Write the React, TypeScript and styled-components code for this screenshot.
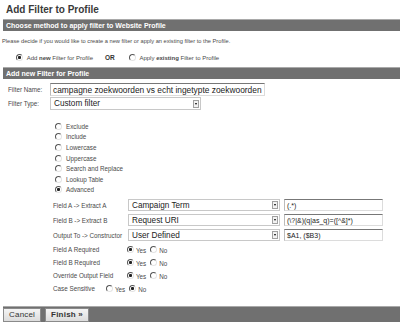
import React from "react";
import styled, { createGlobalStyle, css } from "styled-components";

const GlobalStyle = createGlobalStyle`
	body {
		margin: 0;
		background: #fff;
		font-family: "Liberation Sans", Arial, sans-serif;
		color: #4a4a4a;
	}
`;

const Page = styled.div`
	width: 400px;
	height: 326px;
	overflow: hidden;
	display: flex;
	flex-direction: column;
`;

const Title = styled.h1`
	margin: 0;
	padding: 4px 0 0 6px;
	height: 15px;
	font-size: 10px;
	line-height: 12px;
	font-weight: bold;
	color: #3a3a3a;
`;

const Bar = styled.div`
	margin-left: 3px;
	height: 11px;
	background: #707070;
	border-top: 1px solid #a9a9a9;
	color: #fff;
	font-size: 7px;
	font-weight: bold;
	line-height: 11px;
	padding-left: 3px;
`;

const Intro = styled.p`
	margin: 0;
	padding: 6px 0 0 2px;
	font-size: 5.7px;
	line-height: 9px;
`;

const MethodRow = styled.div`
	display: flex;
	align-items: center;
	padding: 7px 0 5px 16px;
	height: 9px;
	font-size: 6px;
	gap: 2px;
`;

const Or = styled.b`
	margin: 0 12px 0 10px;
	font-size: 6.5px;
	color: #333;
`;

const Radio = styled.span<{ $on?: boolean }>`
	display: inline-block;
	flex: none;
	width: 5px;
	height: 5px;
	border-radius: 50%;
	border: 1px solid;
	border-color: #555 #e4e4e4 #e4e4e4 #555;
	background: #fff;
	${(p) =>
		p.$on &&
		css`
			background: radial-gradient(circle, #222 0 1.3px, #fff 1.8px);
		`}
`;

const Form = styled.div`
	display: flex;
	flex-direction: column;
	padding-top: 4px;
	font-size: 6.3px;
`;

const Row = styled.div<{ $label: number; $left: number; $h?: number; $mt?: number }>`
	display: flex;
	align-items: center;
	height: ${(p) => p.$h ?? 13}px;
	margin-top: ${(p) => p.$mt ?? 0}px;
	padding-left: ${(p) => p.$left}px;

	& > label {
		width: ${(p) => p.$label}px;
		flex: none;
	}
`;

const TextBox = styled.div<{ $w: number; $size?: number; $gap?: number }>`
	box-sizing: border-box;
	width: ${(p) => p.$w}px;
	height: 100%;
	margin-left: ${(p) => p.$gap ?? 0}px;
	border: 1px solid #dcdcdc;
	border-top-color: #777;
	border-left-color: #bbb;
	padding-left: 2px;
	display: flex;
	align-items: center;
	font-size: ${(p) => p.$size ?? 8.4}px;
	color: #222;
	white-space: nowrap;
	overflow: hidden;
`;

const Select = styled.div<{ $w: number }>`
	box-sizing: border-box;
	width: ${(p) => p.$w}px;
	height: 100%;
	border: 1px solid #c8c8c8;
	display: flex;
	align-items: center;
	justify-content: space-between;
	padding-left: 3px;
	font-size: 8.2px;
	color: #222;
	white-space: nowrap;
`;

const Arrow = styled.span`
	box-sizing: border-box;
	width: 6px;
	height: 8px;
	margin-right: 1px;
	border: 1px solid #a0a0a0;
	background: #f2f2f2;
	display: flex;
	align-items: center;
	justify-content: center;

	&::before {
		content: "";
		border-left: 1.5px solid transparent;
		border-right: 1.5px solid transparent;
		border-top: 2px solid #000;
	}
`;

const TypeList = styled.div`
	display: flex;
	flex-direction: column;
	padding: 11px 0 0 55px;
`;

const TypeItem = styled.div`
	display: flex;
	align-items: center;
	gap: 4px;
	height: 10.6px;
`;

const Choice = styled.span`
	display: flex;
	align-items: center;
	gap: 2px;
	margin-right: 4px;

	& > span:last-child {
		padding-top: 2px;
	}
`;

const Footer = styled.div`
	margin: auto 0 4px 3px;
	height: 16px;
	box-sizing: border-box;
	background: #707070;
	border-top: 1px solid #a9a9a9;
	display: flex;
	align-items: center;
	gap: 4px;
`;

const Button = styled.button<{ $bold?: boolean }>`
	height: 14px;
	padding: 0 5px;
	border: 1px solid #8a8a8a;
	background: linear-gradient(#f4f4f4, #dcdcdc);
	font-family: "Liberation Sans", Arial, sans-serif;
	font-size: 8px;
	font-weight: ${(p) => (p.$bold ? "bold" : "normal")};
	color: #333;
	letter-spacing: 0.2px;
`;

const filterTypes = [
	"Exclude",
	"Include",
	"Lowercase",
	"Uppercase",
	"Search and Replace",
	"Lookup Table",
	"Advanced",
];

const fields = [
	{ label: "Field A -> Extract A", value: "Campaign Term", expr: "(.*)" },
	{ label: "Field B -> Extract B", value: "Request URI", expr: "(\\?|&)(q|as_q)=([^&]*)" },
	{ label: "Output To -> Constructor", value: "User Defined", expr: "$A1, ($B3)" },
];

const required = ["Field A Required", "Field B Required", "Override Output Field"];

function YesNo({ yes }: { yes: boolean }) {
	return (
		<>
			<Choice>
				<Radio $on={yes} />
				<span>Yes</span>
			</Choice>
			<Choice>
				<Radio $on={!yes} />
				<span>No</span>
			</Choice>
		</>
	);
}

export default function App() {
	return (
		<Page>
			<GlobalStyle />
			<Title>Add Filter to Profile</Title>
			<Bar>Choose method to apply filter to Website Profile</Bar>
			<Intro>
				Please decide if you would like to create a new filter or apply an existing filter to the Profile.
			</Intro>
			<MethodRow>
				<Radio $on />
				<span>
					&nbsp;Add <b>new</b> Filter for Profile
				</span>
				<Or>OR</Or>
				<Radio />
				<span>
					&nbsp;Apply <b>existing</b> Filter to Profile
				</span>
			</MethodRow>
			<Bar>Add new Filter for Profile</Bar>

			<Form>
				<Row $label={42} $left={8}>
					<label>Filter Name:</label>
					<TextBox $w={215}>campagne zoekwoorden vs echt ingetypte zoekwoorden</TextBox>
				</Row>
				<Row $label={42} $left={8} $mt={1}>
					<label>Filter Type:</label>
					<Select $w={151}>
						Custom filter
						<Arrow />
					</Select>
				</Row>

				<TypeList>
					{filterTypes.map((t) => (
						<TypeItem key={t}>
							<Radio $on={t === "Advanced"} />
							<span>{t}</span>
						</TypeItem>
					))}
				</TypeList>

				{fields.map((f, i) => (
					<Row key={f.label} $label={75} $left={53} $h={12} $mt={i === 0 ? 4 : 3}>
						<label>{f.label}</label>
						<Select $w={152}>
							{f.value}
							<Arrow />
						</Select>
						<TextBox $w={99} $size={7} $gap={4}>
							{f.expr}
						</TextBox>
					</Row>
				))}

				{required.map((r, i) => (
					<Row key={r} $label={74} $left={53} $mt={i === 0 ? 2 : 0}>
						<label>{r}</label>
						<YesNo yes />
					</Row>
				))}
				<Row $label={53} $left={53}>
					<label>Case Sensitive</label>
					<YesNo yes={false} />
				</Row>
			</Form>

			<Footer>
				<Button>Cancel</Button>
				<Button $bold>Finish »</Button>
			</Footer>
		</Page>
	);
}
